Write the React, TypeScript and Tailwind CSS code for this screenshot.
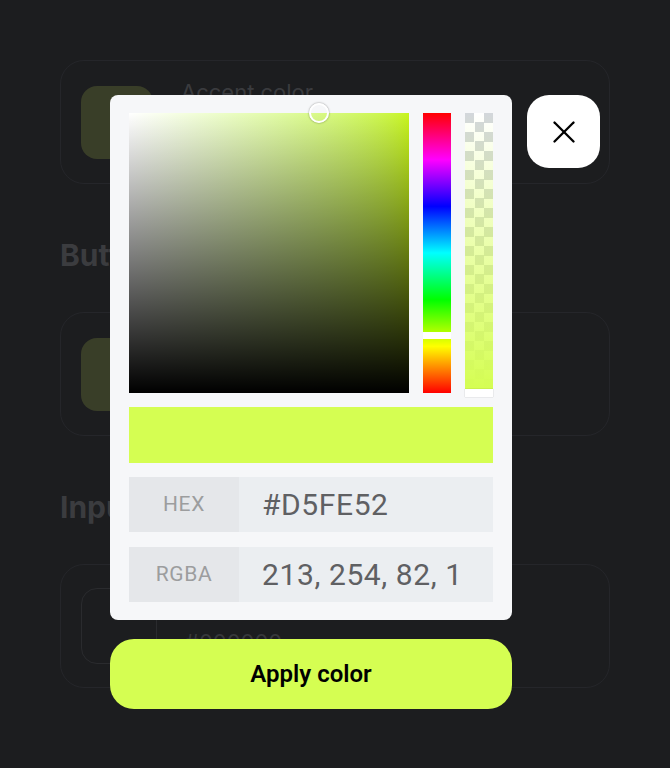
import { X } from "lucide-react";

type SettingCard = {
    label: string;
    value: string;
    outline?: boolean;
};

function Card({ label, value, outline }: SettingCard) {
    return (
        <div className="h-[124px] rounded-[24px] border border-[#25262a] px-[20px] flex items-center gap-[28px]">
            {outline ? (
                <div className="w-[76px] h-[76px] rounded-[16px] border border-[#2a2b2e]" />
            ) : (
                <div className="w-[72px] h-[73px] rounded-[16px] bg-[#393e28]" />
            )}
            <div className="self-start mt-[17px] flex flex-col gap-[18px]">
                <p className="text-[22px] leading-[28px] text-[#3a3b3e]">{label}</p>
                <p className="text-[22px] leading-[28px] text-[#37383b]">{value}</p>
            </div>
        </div>
    );
}

export default function App() {
    return (
        <div className="relative w-[670px] h-[768px] bg-[#1c1d1f] overflow-hidden font-['Inter',sans-serif]">
            {/* page behind the picker */}
            <div className="px-[60px] pt-[60px] flex flex-col">
                <Card label="Accent color" value="#D5FE52" />
                <h2 className="mt-[53px] mb-[39px] text-[30px] leading-[36px] font-bold text-[#3b3c3f]">Button color</h2>
                <Card label="Button color" value="#D5FE52" />
                <h2 className="mt-[53px] mb-[39px] text-[30px] leading-[36px] font-bold text-[#3b3c3f]">Input color</h2>
                <Card label="Input color" value="#000000" outline />
            </div>

            {/* color picker overlay */}
            <div className="absolute inset-0 flex items-start pt-[95px] pl-[110px] gap-[15px]">
                <div className="w-[402px] flex flex-col gap-[19px]">
                    <div className="bg-[#f6f7f9] rounded-[8px] pt-[18px] pb-[18px] pl-[19px] pr-[19px] flex flex-col font-['Roboto',sans-serif]">
                        <div className="flex h-[280px] gap-[14px]">
                            <div className="relative w-[280px] h-full bg-linear-to-r from-white to-[#c8f51a]">
                                <div className="absolute inset-0 bg-linear-to-t from-black to-transparent" />
                                <div className="absolute left-[180px] -top-[10px] w-[20px] h-[20px] rounded-full border-2 border-white shadow-[0_0_2px_rgba(0,0,0,0.5)]" />
                            </div>
                            <div className="relative w-[28px] h-full bg-[linear-gradient(to_bottom,#f00,#f0f,#00f,#0ff,#0f0,#ff0,#f00)]">
                                <div className="absolute left-0 right-0 top-[219px] h-[7px] bg-white" />
                            </div>
                            <div className="relative w-[28px] h-[276px] bg-[conic-gradient(white_25%,#d3d7db_0_50%,white_0_75%,#d3d7db_0)] bg-[length:19px_19px]">
                                <div className="absolute inset-0 bg-linear-to-b from-transparent to-[#d5fe52]" />
                                <div className="absolute left-0 right-0 -bottom-[8px] h-[8px] bg-white shadow-[0_0_1px_rgba(0,0,0,0.3)]" />
                            </div>
                        </div>
                        <div className="mt-[14px] h-[56px] bg-[#d5fe52]" />
                        <div className="mt-[14px] h-[55px] flex">
                            <div className="w-[110px] bg-[#e5e7ea] flex items-center justify-center text-[21px] tracking-[0.03em] text-[#9c9d9e]">HEX</div>
                            <div className="flex-1 bg-[#ebeef1] flex items-center pl-[23px] text-[30px] tracking-[0.02em] text-[#5f6063]">#D5FE52</div>
                        </div>
                        <div className="mt-[15px] h-[55px] flex">
                            <div className="w-[110px] bg-[#e5e7ea] flex items-center justify-center text-[21px] tracking-[0.03em] text-[#9c9d9e]">RGBA</div>
                            <div className="flex-1 bg-[#ebeef1] flex items-center pl-[23px] text-[30px] tracking-[0.02em] text-[#5f6063]">213, 254, 82, 1</div>
                        </div>
                    </div>
                    <button className="h-[70px] rounded-[24px] bg-[#d5fe52] text-[24px] font-semibold text-black font-['Roboto',sans-serif]">
                        Apply color
                    </button>
                </div>
                <button className="w-[73px] h-[73px] rounded-[22px] bg-white flex items-center justify-center">
                    <X size={38} strokeWidth={1.5} className="text-black" />
                </button>
            </div>
        </div>
    );
}
